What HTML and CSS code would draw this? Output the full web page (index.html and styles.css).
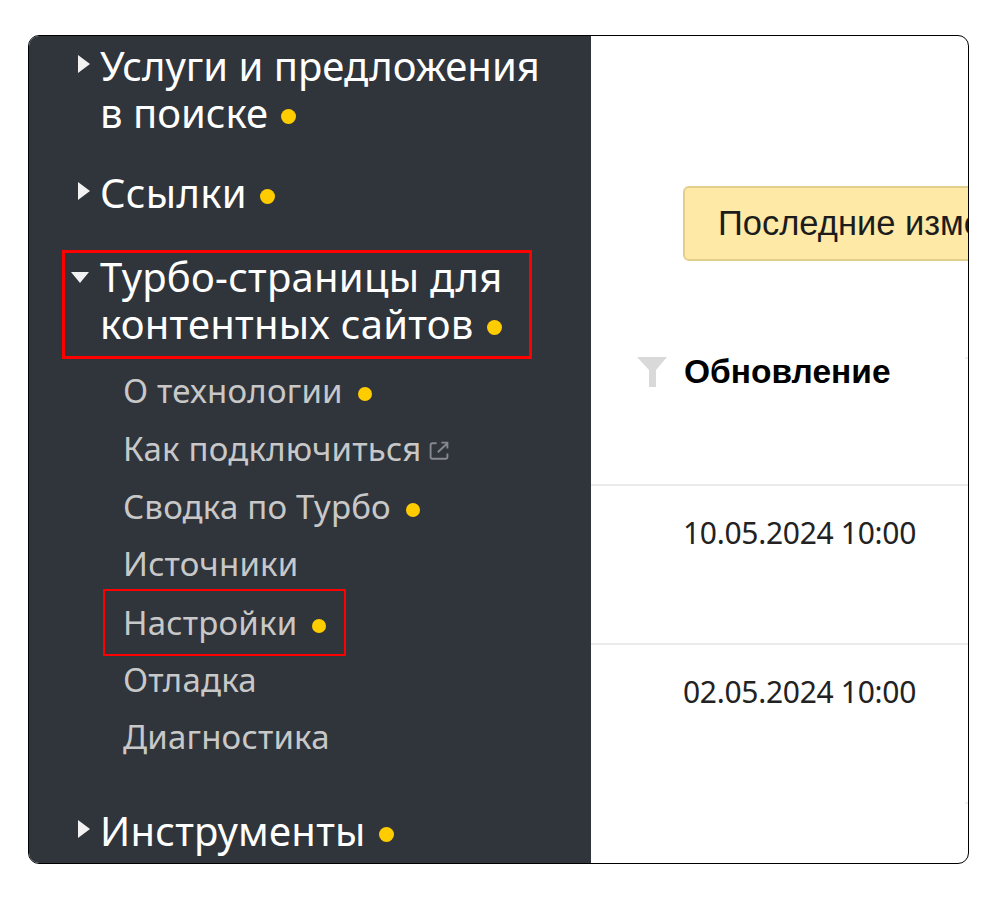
FILE: index.html
```html
<!DOCTYPE html>
<html lang="ru">
<head>
<meta charset="utf-8">
<title>Турбо-страницы</title>
<link rel="stylesheet" href="styles.css">
</head>
<body>
<div class="card">
  <nav class="side">
    <div class="group g1">
      <div class="head"><i class="tri right"></i><span>Услуги и предложения<br>в поиске<b class="dot"></b></span></div>
    </div>
    <div class="group g2">
      <div class="head wide"><i class="tri right"></i><span>Ссылки<b class="dot"></b></span></div>
    </div>
    <div class="group g3">
      <div class="head boxed wide"><i class="tri down"></i><span>Турбо-страницы для<br>контентных сайтов<b class="dot"></b></span></div>
      <ul class="sub">
        <li>О технологии<b class="dot small"></b></li>
        <li>Как подключиться<svg class="ext" width="24" height="24" viewBox="0 0 20 20" fill="none" stroke="#85888c" stroke-width="1.600"><path d="M8 3.500H4.500a1.500 1.500 0 0 0-1.500 1.500v10a1.500 1.500 0 0 0 1.500 1.500h11a1.500 1.500 0 0 0 1.500-1.500V12"/><path d="M9 11l8-7.500M12 3h5v5"/></svg></li>
        <li>Сводка по Турбо<b class="dot small"></b></li>
        <li>Источники</li>
        <li class="marked">Настройки<b class="dot small"></b></li>
        <li>Отладка</li>
        <li>Диагностика</li>
      </ul>
    </div>
    <div class="group g4">
      <div class="head wide"><i class="tri right"></i><span>Инструменты<b class="dot"></b></span></div>
    </div>
  </nav>
  <main class="main">
    <div class="notice">Последние изменения</div>
    <div class="thead">
      <svg class="funnel" width="30" height="30" viewBox="0 0 30 30"><path fill="#d9d9d9" d="M0 0h30L19 13v17h-7V13z"/></svg>
      <span>Обновление</span>
    </div>
    <div class="row">10.05.2024 10:00</div>
    <div class="row">02.05.2024 10:00</div>
    <span class="tick tick-a"></span>
    <span class="tick tick-b"></span>
  </main>
</div>
</body>
</html>
```
FILE: styles.css
```css
html, body { margin: 0; padding: 0; background: #fff; }
body { width: 997px; height: 900px; padding-top: 35px; box-sizing: border-box; }
.card {
  display: flex; box-sizing: border-box;
  width: 941px; height: 829px; margin-left: 28px;
  border: 1px solid #000; border-radius: 11px; overflow: hidden;
}
.side {
  flex: 0 0 562px; background: #30343b; color: #fff;
  font-family: "Noto Sans", sans-serif; padding: 6px 0 0 0;
}
.head { display: flex; font-size: 40px; line-height: 47px; padding-left: 71px; position: relative; }
.head.wide { letter-spacing: 0.25px; }
.tri { position: absolute; width: 0; height: 0; }
.tri.right { left: 49px; top: 13px; border-left: 12px solid #f2f2f2; border-top: 9px solid transparent; border-bottom: 9px solid transparent; }
.dot { display: inline-block; width: 15px; height: 15px; border-radius: 50%; background: #fc0; margin-left: 13px; vertical-align: 4px; }
.dot.small { width: 14px; height: 14px; flex: none; }
.g2 { margin-top: 33px; }
.g3 { margin-top: 35px; }
.g4 { margin-top: 41px; }
.boxed { width: 470px; box-sizing: border-box; height: 109px; margin-left: 33px; padding-left: 35px; padding-top: 0; border: 3px solid #f00; margin-top: -1px; }
.tri.down { left: 6px; top: 19px; border-top: 11px solid #f2f2f2; border-left: 9px solid transparent; border-right: 9px solid transparent; }
.sub { list-style: none; margin: 3px 0 0; padding: 0 0 0 94px; color: #c8c8c8; font-size: 33px; letter-spacing: 0.2px; }
.sub li { height: 57.700px; display: flex; align-items: center; width: max-content; box-sizing: border-box; }
.sub .dot { margin-top: 7px; margin-left: 15px; }
.ext { margin-left: 6px; margin-top: 4px; }
.sub .marked { border: 2px solid #f00; padding: 0 0 0 18px; margin-left: -20px; width: 243px; height: 67px; margin-top: -4px; margin-bottom: -5.300px; }
.main { flex: 1; position: relative; min-width: 0; overflow: hidden; font-family: "Liberation Sans", sans-serif; color: #000; }
.notice {
  box-sizing: border-box; width: 400px; height: 75px; margin: 150px 0 0 92px; padding: 0 0 0 33px;
  display: flex; align-items: center; white-space: nowrap;
  background: #fee9a6; border: 2px solid #e2cf8e; border-radius: 6px; font-size: 34.500px; color: #1c1c1c;
}
.thead { display: flex; align-items: center; margin: 90px 0 0 46px; height: 42px; font-size: 33.500px; font-weight: 700; }
.funnel { margin-right: 17px; }
.row { height: 159px; border-top: 2px solid #ebebeb; padding: 29px 0 0 92px; box-sizing: border-box; font-family: "Noto Sans", sans-serif; font-size: 30px; line-height: 36px; color: #222; letter-spacing: -0.3px; }
.thead + .row { margin-top: 91px; }
.tick { position: absolute; right: 0; width: 3px; height: 2px; background: #eee; }
.tick-a { top: 321px; }
.tick-b { top: 766px; }
```
